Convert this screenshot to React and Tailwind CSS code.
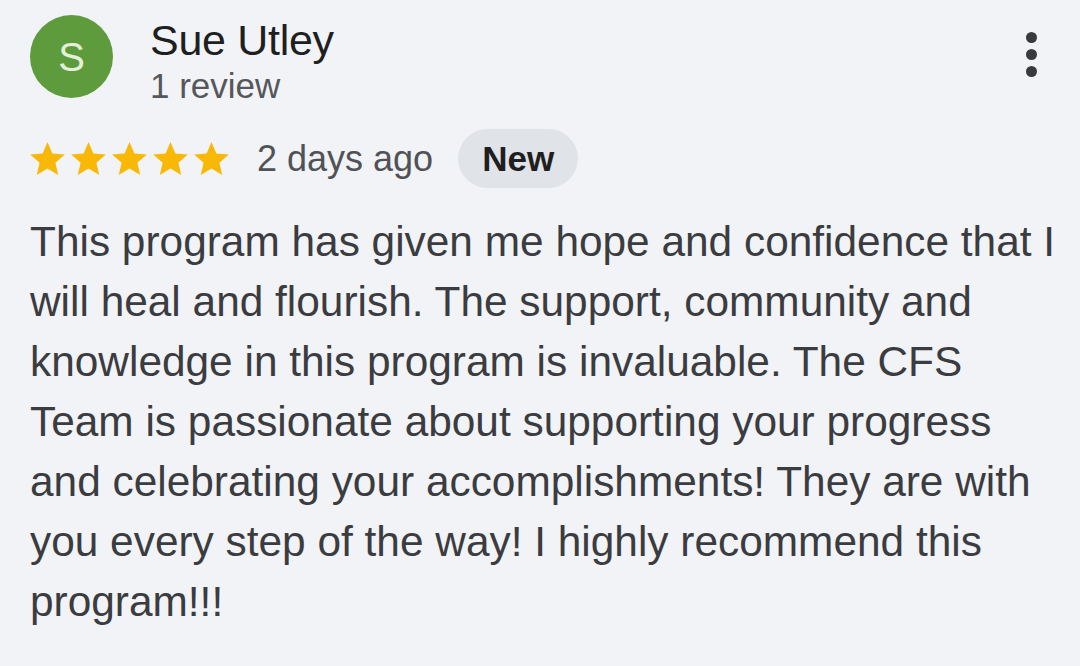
import React from 'react';

const Star = () => (
  <svg viewBox="2 2 20 19" width="35" height="33" className="shrink-0">
    <path
      fill="#f9b806"
      d="M12 17.27L18.18 21l-1.64-7.03L22 9.24l-7.19-.61L12 2 9.19 8.63 2 9.24l5.46 4.73L5.82 21z"
    />
  </svg>
);

export default function App() {
  return (
    <div className="w-[1080px] h-[666px] bg-[#f1f3f7] overflow-hidden font-['Liberation_Sans',Arial,sans-serif]">
      {/* header */}
      <div className="flex items-start justify-between pl-[30px] pr-[43px] pt-[15px]">
        <div className="flex items-start gap-[37px]">
          <div className="w-[83px] h-[83px] rounded-full bg-[#5e9b3c] flex items-center justify-center text-[#e4f1da] text-[40px] leading-none">
            S
          </div>
          <div className="flex flex-col mt-[1px]">
            <span className="text-[43px] leading-[48px] text-[#1f1f1f] tracking-[-0.3px]">Sue Utley</span>
            <span className="mt-[2px] text-[35px] leading-[40px] text-[#55575b]">1 review</span>
          </div>
        </div>
        <div className="flex flex-col gap-[6px] mt-[17px]">
          <span className="w-[11px] h-[11px] rounded-full bg-[#3a3a3c]" />
          <span className="w-[11px] h-[11px] rounded-full bg-[#3a3a3c]" />
          <span className="w-[11px] h-[11px] rounded-full bg-[#3a3a3c]" />
        </div>
      </div>

      {/* rating row */}
      <div className="flex items-center pl-[30px] mt-[23px] h-[59px]">
        <div className="flex items-center gap-[6px]">
          <Star />
          <Star />
          <Star />
          <Star />
          <Star />
        </div>
        <span className="ml-[28px] text-[36px] text-[#505256] leading-none">2 days ago</span>
        <span className="ml-[25px] h-[59px] px-[24px] rounded-full bg-[#e0e3e8] flex items-center text-[35px] font-bold text-[#1f1f1f] leading-none">
          New
        </span>
      </div>

      {/* review body */}
      <p className="pl-[30px] pr-[16px] mt-[24px] text-[42.4px] leading-[60px] text-[#3b3c3f]">
        This program has given me hope and confidence that I will heal and flourish. The support, community and
        knowledge in this program is invaluable. The CFS Team is passionate about supporting your progress and
        celebrating your accomplishments! They are with you every step of the way! I highly recommend this
        program!!!
      </p>
    </div>
  );
}
